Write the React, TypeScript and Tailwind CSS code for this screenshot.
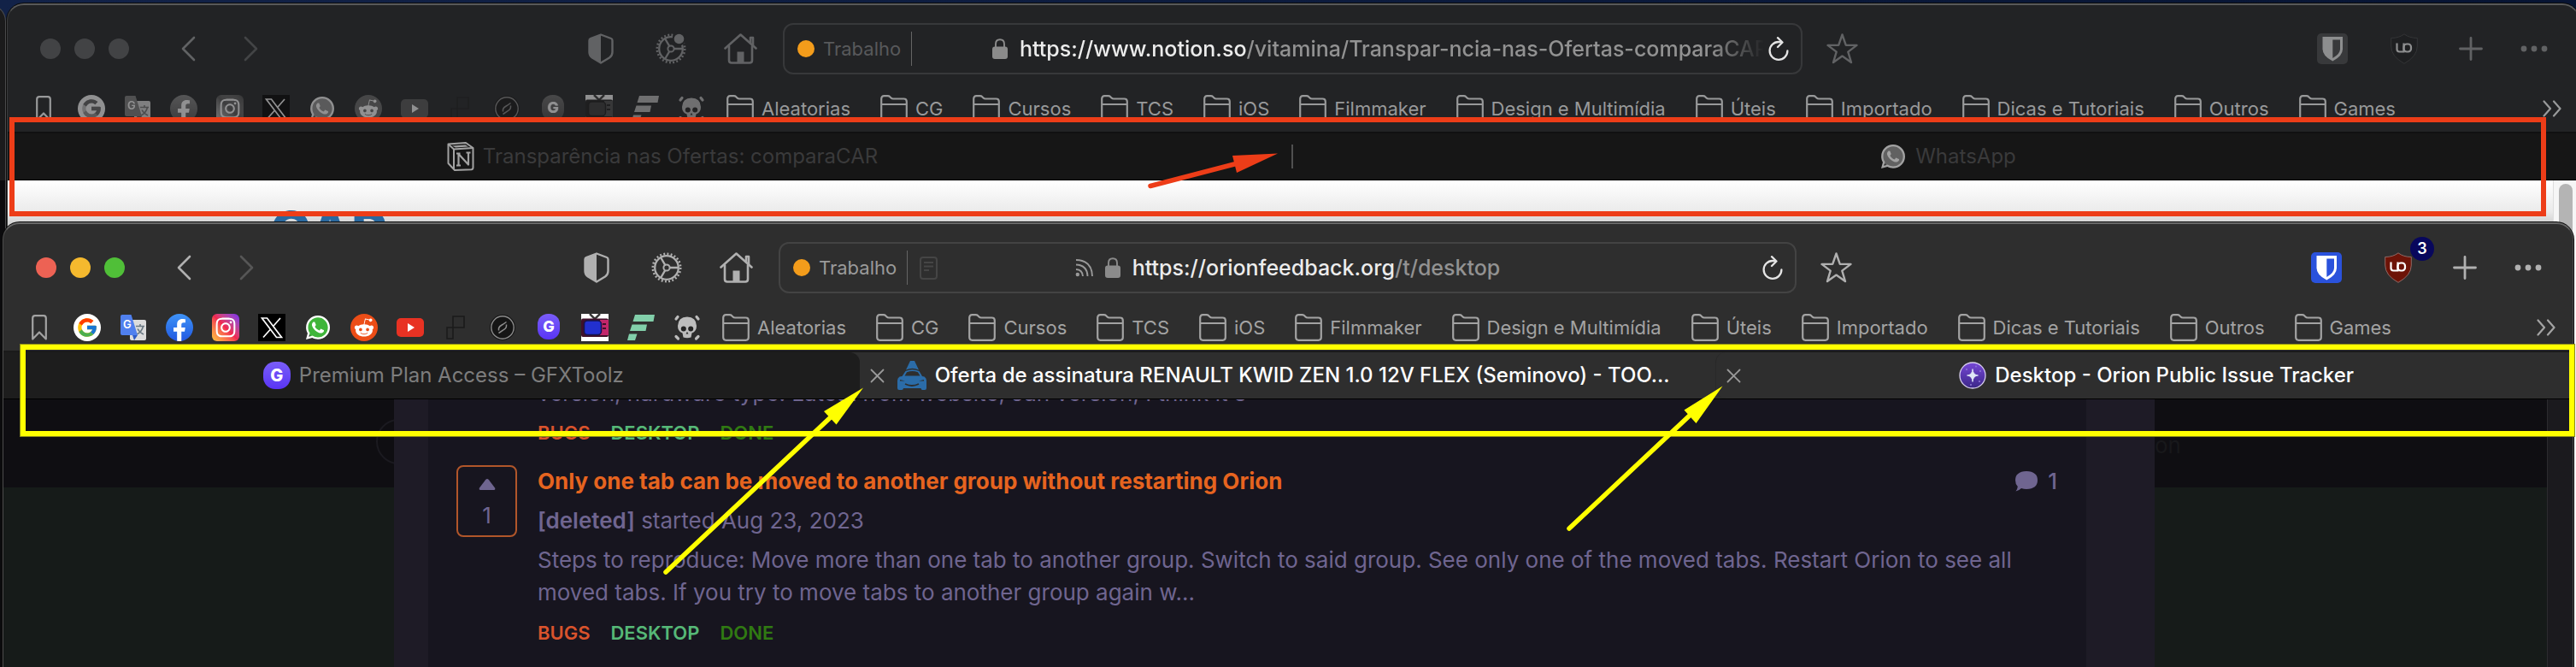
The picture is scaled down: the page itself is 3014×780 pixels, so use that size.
import type { ReactNode } from "react";
import { clsx } from "clsx";
import { FcGoogle } from "react-icons/fc";
import { FaFacebookF, FaInstagram, FaRedditAlien, FaWhatsapp } from "react-icons/fa";

interface Tab {
  title: string;
  icon: ReactNode;
  selected?: boolean;
  closable?: boolean;
  clipped?: boolean;
}

interface BrowserWindowProps {
  active?: boolean;
  host: string;
  path: string;
  tabs: Tab[];
  badge?: string;
  children: ReactNode;
}

const FOLDERS = [
  "Aleatorias",
  "CG",
  "Cursos",
  "TCS",
  "iOS",
  "Filmmaker",
  "Design e Multimídia",
  "Úteis",
  "Importado",
  "Dicas e Tutoriais",
  "Outros",
  "Games",
];

/* ---------- Toolbar icons ---------- */

function ChevronIcon({ flip }: { flip?: boolean }) {
  return (
    <svg width="17" height="30" viewBox="0 0 17 30" fill="none" stroke="currentColor" strokeWidth="2.6" strokeLinecap="round" strokeLinejoin="round">
      <path d={flip ? "M2 2L15 15L2 28" : "M15 2L2 15L15 28"} />
    </svg>
  );
}

function ShieldIcon() {
  return (
    <svg width="30" height="36" viewBox="0 0 30 36">
      <path d="M15 1.5L27 6Q28.5 6.6 28.5 8.5V22Q28.5 26 25 28.5L15 34.5L5 28.5Q1.5 26 1.5 22V8.5Q1.5 6.6 3 6Z" fill="none" stroke="currentColor" strokeWidth="2.4" strokeLinejoin="round" />
      <path d="M15 1.5V34.5L5 28.5Q1.5 26 1.5 22V8.5Q1.5 6.6 3 6Z" fill="currentColor" />
    </svg>
  );
}

function GearIcon({ dot }: { dot?: boolean }) {
  return (
    <svg width="36" height="36" viewBox="0 0 36 36" fill="none" stroke="currentColor">
      <circle cx="18" cy="18" r="16.2" strokeWidth="2.6" strokeDasharray="1.9 2.341" />
      <circle cx="18" cy="18" r="13.8" strokeWidth="2.3" />
      <circle cx="18" cy="18" r="3.6" strokeWidth="2" />
      <path d="M21.6 18H32M16.2 14.9L11 6M16.2 21.1L11 30" strokeWidth="2.3" />
      {dot && (
        <>
          <circle cx="27.5" cy="6.5" r="8" className="fill-[#222325]" stroke="none" />
          <circle cx="27.5" cy="6.5" r="5.8" fill="currentColor" stroke="none" />
        </>
      )}
    </svg>
  );
}

function HomeIcon() {
  return (
    <svg width="39" height="36" viewBox="0 0 39 36" fill="none" stroke="currentColor" strokeWidth="2.6" strokeLinejoin="round" strokeLinecap="round">
      <path d="M1.5 17.5L19.5 1.5L37.5 17.5" />
      <path d="M31 11V5H34V14" />
      <path d="M6 15V31.5Q6 34.5 9 34.5H30Q33 34.5 33 31.5V15" />
      <path d="M15.5 34V21.5H23.5V34Z" fill="currentColor" stroke="none" />
    </svg>
  );
}

function StarIcon() {
  return (
    <svg width="37" height="36" viewBox="0 0 37 36" fill="none" stroke="currentColor" strokeWidth="2.4" strokeLinejoin="round">
      <path d="M18.5 1.5L22.7 13.7L35.5 13.9L25.3 21.6L29 34L18.5 26.6L8 34L11.7 21.6L1.5 13.9L14.3 13.7Z" />
    </svg>
  );
}

function BitwardenIcon({ active }: { active?: boolean }) {
  return (
    <svg width="36" height="36" viewBox="0 0 36 36">
      <rect width="36" height="36" rx="5" fill={active ? "#2a52dc" : "#38393b"} />
      <path d="M6.5 4H30V18.5Q30 26.5 18.3 32.5Q6.5 26.5 6.5 18.5Z" fill={active ? "#ffffff" : "#8d8e8f"} />
      <path d="M18.3 7.5H27V18.5Q27 24 18.3 29Z" fill={active ? "#2a52dc" : "#38393b"} />
    </svg>
  );
}

function UblockIcon({ active }: { active?: boolean }) {
  return (
    <svg width="32" height="36" viewBox="0 0 32 36">
      <path d="M16 .8Q22 5.5 31.3 5.5V15Q31.3 27 16 35.3Q.7 27 .7 15V5.5Q10 5.5 16 .8Z" fill={active ? "#6d1307" : "#1e1f21"} stroke={active ? "#8f6a66" : "#343537"} />
      <g fill="none" stroke={active ? "#ffffff" : "#8d8e8f"} strokeWidth="2.2">
        <path d="M7.5 11.5V18.5Q7.5 21.5 10.5 21.5H15.500V11.500" />
        <rect x="15.5" y="12.5" width="8.5" height="9" rx="3.5" />
      </g>
    </svg>
  );
}

/* ---------- Bookmark icons ---------- */

function FolderIcon() {
  return (
    <svg className="shrink-0" width="32" height="32" viewBox="0 0 32 32" fill="none" stroke="currentColor" strokeWidth="2.2" strokeLinejoin="round">
      <path d="M1.2 27.5V4.5Q1.2 1.2 4.5 1.2H8.5Q10.3 1.2 11.3 2.3L12.5 3.5Q13.5 4.5 15 4.5H27.5Q30.8 4.5 30.8 7.8V27.5Q30.8 30.8 27.5 30.8H4.5Q1.2 30.8 1.2 27.5Z" />
      <path d="M1.2 11H30.8" />
    </svg>
  );
}

function GfxIcon({ small }: { small?: boolean }) {
  return (
    <span className={clsx("flex items-center justify-center bg-linear-to-b from-[#7a5cf8] to-[#5a33f5] font-extrabold leading-none text-white", small ? "mx-[3px] h-[30px] w-[26px] rounded-xl text-[18px]" : "size-8 rounded-[14px] text-xl")}>
      G
    </span>
  );
}

function WhatsappIcon() {
  return (
    <span className="relative flex size-8 items-center justify-center">
      <span className="absolute size-[26px] rounded-full bg-[#3fb53a]" />
      <FaWhatsapp className="relative size-8 text-white" />
    </span>
  );
}

function NotionIcon() {
  return (
    <svg width="32" height="34" viewBox="0 0 32 34" fill="none" stroke="#ffffff" strokeLinejoin="round">
      <path d="M1.500 2.500L22 1L30.500 7V30Q30.500 32 28.500 32.200L9 33L1.500 25Z" strokeWidth="2" />
      <path d="M1.500 2.500L8 8.500L30.500 7M8 8.500V32" strokeWidth="2" />
      <path d="M6 4.500L21.500 3.500L25 5.500L10 6.500Z" fill="#ffffff" stroke="none" />
      <path d="M13.500 27V14L25 26.500V13M11 13.500H15.500M22.500 12.500H27.500M11 27.500H16" strokeWidth="2.200" />
    </svg>
  );
}

function OrionIcon() {
  return (
    <svg width="32" height="32" viewBox="0 0 32 32">
      <defs>
        <linearGradient id="orion" x1="0" y1="0" x2="0" y2="1">
          <stop offset="0" stopColor="#7747d6" />
          <stop offset="1" stopColor="#3b2788" />
        </linearGradient>
      </defs>
      <circle cx="16" cy="16" r="15" fill="url(#orion)" stroke="#d9cff0" strokeWidth="1.3" />
      <path d="M16 8.5Q16.5 15.500 22.500 16Q16.500 16.500 16 23.500Q15.500 16.500 9.500 16Q15.500 15.500 16 8.500Z" fill="#dfe7f6" stroke="#dfe7f6" strokeWidth=".8" />
      <g fill="#8f79d8">
        <circle cx="9" cy="9" r="1" />
        <circle cx="20" cy="5.5" r=".9" />
        <circle cx="25" cy="11" r="1" />
        <circle cx="14" cy="27" r="1" />
        <circle cx="24" cy="23" r="1" />
      </g>
    </svg>
  );
}

function CarIcon() {
  return (
    <svg width="34" height="34" viewBox="0 0 34 34" fill="#2b6ca8">
      <path d="M15 0H20L25 10.500Q17.500 7 10 10.500Z" />
      <path d="M9.500 12Q17.500 8.500 25.500 12L29 18L31.500 18.500Q34 20 34 23V32Q34 34 32 34H29.500Q27.500 34 27.500 32H7Q7 34 5 34H2Q0 34 0 32V23Q0 20 2.500 18.500L5.500 18Z" />
      <path d="M11 13.300Q17.500 10.800 24 13.300L26.500 17.500H8.500Z" fill="#2e2e2e" />
      <path d="M3 22L9 23.500H3ZM31 22L25 23.500H31Z" fill="#2e2e2e" />
      <path d="M9 27Q17 31 25 27" fill="none" stroke="#2e2e2e" strokeWidth="1.8" />
    </svg>
  );
}

const SITES: { name: string; icon: ReactNode }[] = [
  {
    name: "Google",
    icon: (
      <span className="flex size-8 items-center justify-center rounded-full bg-white">
        <FcGoogle className="size-[26px]" />
      </span>
    ),
  },
  {
    name: "Google Translate",
    icon: (
      <svg width="32" height="32" viewBox="0 0 32 32">
        <rect x="12" y="7" width="19" height="24" rx="2" fill="#dcdcdc" />
        <path d="M19 14.5H29M24 12V14.5M27.5 14.5Q26 21 20 24M21 17.5Q23 21.5 28 24" fill="none" stroke="#6b7a84" strokeWidth="1.6" />
        <path d="M15 25H21L17 31Z" fill="#2f5bc4" />
        <path d="M3 1H13.5L21 25H3Q1 25 1 23V3Q1 1 3 1Z" fill="#5080ee" />
        <text x="4" y="17" fontSize="13" fontWeight="600" fill="#ffffff">G</text>
      </svg>
    ),
  },
  {
    name: "Facebook",
    icon: (
      <span className="flex size-8 items-end justify-center overflow-hidden rounded-full bg-linear-to-b from-[#3f93f7] to-[#2457e0]">
        <FaFacebookF className="size-[26px] text-white" />
      </span>
    ),
  },
  {
    name: "Instagram",
    icon: (
      <span className="flex size-8 items-center justify-center rounded-md bg-linear-to-tr from-[#fdc53a] via-[#f0274f] to-[#7a1df5]">
        <FaInstagram className="size-[26px] text-white" />
      </span>
    ),
  },
  {
    name: "X",
    icon: (
      <svg width="32" height="32" viewBox="0 0 32 32">
        <rect width="32" height="32" fill="#000000" />
        <path d="M4.5 5H10.5L27.5 27.5H21.5ZM26 5L17.5 14.7M14.3 18.2L6 27.5" fill="none" stroke="#ffffff" strokeWidth="1.7" />
      </svg>
    ),
  },
  { name: "WhatsApp", icon: <WhatsappIcon /> },
  {
    name: "Reddit",
    icon: (
      <span className="flex size-8 items-center justify-center rounded-full bg-[#ec4d17]">
        <FaRedditAlien className="size-6 text-white" />
      </span>
    ),
  },
  {
    name: "YouTube",
    icon: (
      <svg width="32" height="32" viewBox="0 0 32 32">
        <rect x="0" y="5" width="32" height="22" rx="5" fill="#e83223" />
        <path d="M13 11L21 16L13 21Z" fill="#ffffff" />
      </svg>
    ),
  },
  {
    name: "Blocks",
    icon: (
      <svg width="32" height="32" viewBox="0 0 32 32" fill="none" stroke="#1b1b1b" strokeWidth="1.6">
        <path d="M12 3H25V16H12ZM5 16H12V29H5Z" />
      </svg>
    ),
  },
  {
    name: "Feather",
    icon: (
      <svg width="32" height="32" viewBox="0 0 32 32">
        <circle cx="16" cy="16" r="15" fill="#151515" />
        <circle cx="16" cy="16" r="13.2" fill="none" stroke="#8b8b8b" strokeWidth="1.4" />
        <path d="M11.5 19.5V17Q12 14.5 16 12.5L20.5 9.5M11.5 22.5L16.5 19.2Q20.5 17 20.5 14V12.5" fill="none" stroke="#8b8b8b" strokeWidth="1.5" />
      </svg>
    ),
  },
  { name: "GFXToolz", icon: <GfxIcon small /> },
  {
    name: "TV",
    icon: (
      <svg width="32" height="32" viewBox="0 0 32 32">
        <rect width="32" height="32" fill="#ffffff" />
        <path d="M10 0L16 6L22 0" fill="none" stroke="#3a3a3a" strokeWidth="2.5" />
        <rect x="0" y="5.5" width="32" height="21.5" rx="2" fill="#40102a" />
        <rect x="22" y="7" width="10" height="18" fill="#c2266b" />
        <path d="M25 12H29M25 17H29" stroke="#40102a" strokeWidth="2" />
        <rect x="3.5" y="8" width="20" height="16.5" rx="4" fill="#2230cf" stroke="#15154f" strokeWidth="1.5" />
      </svg>
    ),
  },
  {
    name: "Freepik",
    icon: (
      <svg width="32" height="32" viewBox="0 0 32 32" fill="#82cfaa">
        <path d="M9 1H32L30.5 9H6.5ZM5.5 12.5H23L21.5 20H3ZM2 23.5H11.5L9 31H0Z" />
      </svg>
    ),
  },
  {
    name: "Skull",
    icon: (
      <svg width="32" height="32" viewBox="0 0 32 32" fill="#bdbdbd">
        <path d="M16 3.5Q26.5 3.5 27 14Q27.2 20.5 21.5 22.5L20.5 27.5Q16 29 11.5 27.5L10.5 22.5Q4.8 20.5 5 14Q5.5 3.5 16 3.5Z" />
        <circle cx="11.8" cy="17.5" r="3" fill="#232323" />
        <circle cx="20.2" cy="17.5" r="3" fill="#232323" />
        <path d="M16 21L17.5 23.5H14.5Z" fill="#232323" />
        <g stroke="#bdbdbd" strokeWidth="3.2" strokeLinecap="round">
          <path d="M3 6L5 3.5M29 6L27 3.5M3 26.5L5.500 29M29 26.5L26.500 29" />
        </g>
      </svg>
    ),
  },
];

/* ---------- Browser window ---------- */

function AddressBar({ active, host, path }: { active?: boolean; host: string; path: string }) {
  return (
    <div className={clsx("grid h-[60px] flex-1 grid-cols-[minmax(243px,1fr)_minmax(0,auto)_minmax(43px,1fr)] items-center rounded-xl border-2", active ? "border-[#434343]" : "border-[#37383a]")}>
      <div className="flex items-center pl-[15px]">
        <button className={clsx("flex items-center gap-[10px] text-[22px] leading-7", active ? "text-[#9a9a9a]" : "text-[#58595b]")}>
          <span className="size-5 rounded-full bg-[#f39c1b]" />
          Trabalho
        </button>
        <span className="ml-3 h-10 w-px bg-[#656565]" />
        {active && (
          <svg className="ml-[14px]" width="21" height="27" viewBox="0 0 21 27" fill="none" stroke="#454545" strokeWidth="2">
            <rect x="1" y="1" width="19" height="25" rx="3" />
            <path d="M5 7H16M5 11.5H16M5 16H11" />
          </svg>
        )}
      </div>
      <a href="#" className={clsx("flex items-center gap-[14px] overflow-hidden whitespace-nowrap text-[25px] font-medium leading-8", !active && "[mask-image:linear-gradient(to_right,black_93%,transparent)]")}>
        {active && (
          <svg className="shrink-0" width="21" height="21" viewBox="0 0 21 21" fill="none" stroke="#9a9a9a" strokeWidth="1.9">
            <path d="M1 1Q19.5 1.5 20 20M1 6.5Q14 7 14.5 20M1 12Q8.5 12.5 9 20" />
            <circle cx="2.8" cy="18" r="2.2" fill="#9a9a9a" stroke="none" />
          </svg>
        )}
        <svg className="shrink-0" width="18" height="24" viewBox="0 0 18 24">
          <rect x="0" y="9.5" width="18" height="14.5" rx="3" fill="#8b8b8b" />
          <path d="M4 11V6.5Q4 1.2 9 1.2Q14 1.2 14 6.5V11" fill="none" stroke="#8b8b8b" strokeWidth="1.9" />
        </svg>
        <span className="text-[#929292]">
          <span className="text-[#ececec]">{host}</span>
          {path}
        </span>
      </a>
      <div className="flex justify-end pr-[14px] text-[#e4e4e4]">
        <button aria-label="Reload">
          <svg width="24" height="28" viewBox="0 0 24 28" fill="none" stroke="currentColor" strokeWidth="2.3" strokeLinecap="round" strokeLinejoin="round">
            <path d="M15 6.5Q13.5 6 12 6A10.4 10.4 0 1 0 22.4 16.5" />
            <path d="M11 1.2L16.5 6.5L11 12" />
          </svg>
        </button>
      </div>
    </div>
  );
}

function BrowserWindow({ active, host, path, tabs, badge, children }: BrowserWindowProps) {
  return (
    <section
      className={clsx(
        "flex h-full flex-col overflow-hidden rounded-t-[20px] border border-b-0 border-t-2 shadow-[0_0_0_1px_#0c0c0c]",
        active ? "border-x-[#4c4c4c] border-t-[#696969] bg-[#2e2e2e]" : "border-x-[#3b3c3d] border-t-[#58595a] bg-[#222325]"
      )}
    >
      <div className={clsx("flex h-[102px] shrink-0 items-center pl-[38px] pr-9", active ? "text-[#b0b0b0]" : "text-[#616264]")}>
        <div className="flex gap-4">
          <button aria-label="Close window" className={clsx("size-6 rounded-full", active ? "bg-[#ed6254]" : "bg-[#424345]")} />
          <button aria-label="Minimize window" className={clsx("size-6 rounded-full", active ? "bg-[#f5b92e]" : "bg-[#424345]")} />
          <button aria-label="Zoom window" className={clsx("size-6 rounded-full", active ? "bg-[#50bf38]" : "bg-[#424345]")} />
        </div>
        <button aria-label="Back" className="ml-[61px]">
          <ChevronIcon />
        </button>
        <button aria-label="Forward" className={clsx("ml-14", active ? "text-[#565656]" : "text-[#434446]")}>
          <ChevronIcon flip />
        </button>
        <span className="w-[386px] shrink" />
        <button aria-label="Privacy report"><ShieldIcon /></button>
        <button aria-label="Website settings" className="ml-[49px]"><GearIcon dot={!active} /></button>
        <button aria-label="Home" className="ml-11 mr-[30px]"><HomeIcon /></button>
        <AddressBar active={active} host={host} path={path} />
        <button aria-label="Add bookmark" className="ml-7"><StarIcon /></button>
        <span className="w-[537px] shrink" />
        <button aria-label="Bitwarden"><BitwardenIcon active={active} /></button>
        <button aria-label="uBlock Origin" className="relative ml-[50px]">
          <UblockIcon active={active} />
          {badge && (
            <span className="absolute -top-[18px] left-[30px] flex size-7 items-center justify-center rounded-full bg-[#08075c] text-lg font-semibold text-white">
              {badge}
            </span>
          )}
        </button>
        <button aria-label="New tab" className="ml-12">
          <svg width="28" height="28" viewBox="0 0 28 28" fill="none" stroke="currentColor" strokeWidth="2.8" strokeLinecap="round">
            <path d="M14 1.5V26.5M1.5 14H26.5" />
          </svg>
        </button>
        <button aria-label="More" className="ml-11">
          <svg width="32" height="8" viewBox="0 0 32 8" fill="currentColor">
            <circle cx="4" cy="4" r="3.4" />
            <circle cx="16" cy="4" r="3.4" />
            <circle cx="28" cy="4" r="3.4" />
          </svg>
        </button>
      </div>

      <nav className={clsx("flex h-[46px] shrink-0 items-center pb-2 pl-[33px] pr-[20px] text-[22px] leading-8", active ? "text-[#a3a3a3]" : "text-[#98999a]")}>
        <svg className="mr-[31px] shrink-0" width="18" height="30" viewBox="0 0 18 30" fill="none" stroke="currentColor" strokeWidth="2.2" strokeLinejoin="round">
          <path d="M1.2 28.5V4Q1.2 1.2 4 1.2H14Q16.8 1.2 16.8 4V28.5L9 20.5Z" />
        </svg>
        <div className={clsx("flex gap-[22px]", !active && "opacity-50 grayscale")}>
          {SITES.map((site) => (
            <a key={site.name} href="#" aria-label={site.name} className="shrink-0">
              {site.icon}
            </a>
          ))}
        </div>
        <div className="ml-[25px] flex gap-[35px]">
          {FOLDERS.map((name) => (
            <button key={name} className="flex items-center gap-[9px] whitespace-nowrap">
              <FolderIcon />
              {name}
            </button>
          ))}
        </div>
        <button aria-label="More bookmarks" className="ml-auto">
          <svg width="22" height="20" viewBox="0 0 22 20" fill="none" stroke="currentColor" strokeWidth="2.2" strokeLinecap="round" strokeLinejoin="round">
            <path d="M1.5 1.5L9 10L1.5 18.5M13 1.5L20.5 10L13 18.5" />
          </svg>
        </button>
      </nav>

      <div
        role="tablist"
        className={clsx(
          "flex h-[57px] shrink-0 border-b border-t-2 border-b-black text-2xl",
          active ? "border-t-[#1a1a1a] bg-[#2e2e2e]" : "border-t-[#101011] bg-[#161616]"
        )}
      >
        {tabs.map((tab, i) => (
          <div
            key={tab.title}
            role="tab"
            aria-selected={!!tab.selected}
            className={clsx(
              "relative flex min-w-0 flex-1 items-center pl-11 pr-4",
              active && !tab.selected && "rounded-tr-xl bg-[#1d1d1d] text-[#7d7d7d]",
              active && tab.selected && "font-medium text-white",
              active && tab.selected && i > 1 && "rounded-l-xl border-l border-[#282828]",
              !active && "text-[#3a3a3b]",
              !tab.clipped && "justify-center"
            )}
          >
            {tab.closable && (
              <button aria-label="Close tab" className="absolute left-3 text-[#999999]">
                <svg width="17" height="17" viewBox="0 0 17 17" fill="none" stroke="currentColor" strokeWidth="1.8" strokeLinecap="round">
                  <path d="M1.5 1.5L15.5 15.5M15.5 1.5L1.5 15.5" />
                </svg>
              </button>
            )}
            <span className={clsx("mr-[10px] shrink-0", !active && "opacity-60 grayscale")}>{tab.icon}</span>
            <span className="truncate">{tab.title}</span>
            {!active && i === 0 && <span className="absolute right-0 h-7 w-[2px] bg-[#505050]" />}
          </div>
        ))}
      </div>

      <div className="flex min-h-0 flex-1">{children}</div>
    </section>
  );
}

/* ---------- Page shown in the front window ---------- */

function Tags() {
  return (
    <div className="flex gap-6 text-[22px] font-semibold leading-[38px]">
      <a href="#" className="text-[#d9532c]">BUGS</a>
      <a href="#" className="text-[#56b877]">DESKTOP</a>
      <a href="#" className="text-[#307a12]">DONE</a>
    </div>
  );
}

function IssueTracker() {
  return (
    <>
      <div className="flex w-[457px] shrink-0 flex-col bg-[#161b19]">
        <div className="flex h-[103px] justify-end overflow-hidden bg-[#0f0e12] pt-[23px]">
          <span className="-mr-8 size-[53px] rounded-full border-2 border-[#1b1a20]" />
        </div>
      </div>
      <main className="flex min-w-0 flex-1 bg-[#1e1b26] pl-10 pr-20">
        <div className="w-full overflow-hidden bg-[#17151f] pl-[33px] pr-[34px] text-[26px] leading-[38px] text-[#6f6590]">
          <div className="-mt-[26px] pl-[95px]">
            <p className="whitespace-nowrap">version, hardware type: Latest from website, Jan version, I think it's</p>
            <div className="mt-2">
              <Tags />
            </div>
          </div>
          <article className="mt-[19px] flex items-start">
            <button aria-label="Upvote" className="flex h-[84px] w-[71px] shrink-0 flex-col items-center rounded-lg border-2 border-[#b1562a] pt-[14px]">
              <svg width="20" height="13" viewBox="0 0 20 13" fill="currentColor">
                <path d="M10 0Q11 0 12 1.2L19 10.5Q20 12.7 18 13H2Q0 12.7 1 10.5L8 1.2Q9 0 10 0Z" />
              </svg>
              <span className="mt-[11px] leading-[38px]">1</span>
            </button>
            <div className="ml-6 min-w-0 flex-1">
              <div className="flex justify-between">
                <h2 className="font-bold">
                  <a href="#" className="text-[#e6641f]">Only one tab can be moved to another group without restarting Orion</a>
                </h2>
                <span className="flex items-center gap-3 font-medium">
                  <svg width="26" height="24" viewBox="0 0 26 24" fill="currentColor">
                    <path d="M13 0Q26 .5 26 10.5Q26 20.5 13 21Q10 21 7 20Q4.5 22.5 .5 23.5Q2.5 21 2.8 18Q0 15 0 10.5Q0 .5 13 0Z" />
                  </svg>
                  1
                </span>
              </div>
              <p className="mt-2">
                <b className="font-semibold">[deleted]</b> started Aug 23, 2023
              </p>
              <p className="mt-2 whitespace-nowrap">
                Steps to reproduce: Move more than one tab to another group. Switch to said group. See only one of the moved tabs. Restart Orion to see all
                <br />
                moved tabs. If you try to move tabs to another group again w...
              </p>
              <div className="mt-[9px]">
                <Tags />
              </div>
            </div>
          </article>
        </div>
      </main>
      <div className="flex w-[459px] shrink-0 flex-col bg-[#161b19]">
        <div className="h-[103px] overflow-hidden bg-[#0f0e12] pt-[38px] text-[26px] leading-8 text-[#18181b]">on</div>
      </div>
      <div className="w-[30px] shrink-0 border-l border-[#2c2b2f] bg-[#1b1a1e]" />
    </>
  );
}

function NotionPage() {
  return (
    <>
      <div className="flex-1 overflow-hidden bg-linear-to-b from-white via-[#ebebeb] via-[36px] to-[#d6d6d6] to-[48px]">
        <p className="pl-[307px] pt-[27px] text-[64px] font-extrabold leading-[66px] text-[#2a699f]">CAR</p>
      </div>
      <div className="w-[30px] shrink-0 border-l border-[#dedede] bg-[#f6f6f6] pl-[6px] pt-1">
        <div className="h-full w-4 rounded-t-full bg-[#b4b4b4]" />
      </div>
    </>
  );
}

export default function App() {
  return (
    <div className="relative min-h-screen overflow-hidden bg-linear-to-r from-[#122248] to-[#071433] [font-family:Inter,'Liberation_Sans',sans-serif]">
      {/* sliver of the window furthest back */}
      <div className="absolute bottom-0 -left-10 top-[5px] w-[47px] rounded-tr-[20px] border-r border-t border-[#4a4a4b] bg-linear-to-b from-[#1b1b1c] from-[205px] to-[#0b0b0d] to-[205px]" />

      <div className="absolute -right-1 bottom-0 left-2 top-1">
        <BrowserWindow
          host="https://www.notion.so"
          path="/vitamina/Transpar-ncia-nas-Ofertas-comparaCAR-"
          tabs={[
            { title: "Transparência nas Ofertas: comparaCAR", icon: <NotionIcon /> },
            { title: "WhatsApp", icon: <WhatsappIcon /> },
          ]}
        >
          <NotionPage />
        </BrowserWindow>
      </div>

      <div className="absolute inset-x-[3px] bottom-0 top-[260px]">
        <BrowserWindow
          active
          host="https://orionfeedback.org"
          path="/t/desktop"
          badge="3"
          tabs={[
            { title: "Premium Plan Access – GFXToolz", icon: <GfxIcon /> },
            { title: "Oferta de assinatura RENAULT KWID ZEN 1.0 12V FLEX (Seminovo) - TOO...", icon: <CarIcon />, selected: true, closable: true, clipped: true },
            { title: "Desktop - Orion Public Issue Tracker", icon: <OrionIcon />, selected: true, closable: true },
          ]}
        >
          <IssueTracker />
        </BrowserWindow>
      </div>

      {/* annotations */}
      <div className="pointer-events-none absolute left-[11px] right-[35px] top-[137px] h-[116px] border-[6px] border-[#ed3d18]" />
      <div className="pointer-events-none absolute left-6 right-[2px] top-[403px] h-[107px] border-[6px] border-[#ffff00] shadow-[0_0_0_1px_#8a8a1a]" />
      <svg className="pointer-events-none absolute left-0 top-0" width="3014" height="780" viewBox="0 0 3014 780">
        <g fill="#ed3d18" stroke="#ed3d18">
          <path d="M1346 217.5L1448 191" strokeWidth="5.5" strokeLinecap="round" />
          <path d="M1495 179.5L1442 182L1447 202Z" stroke="none" />
        </g>
        <g fill="#ffff00" stroke="#ffff00" strokeLinecap="round">
          <path d="M779 669L975 485M1836 618L1980 483" strokeWidth="5.5" />
          <path d="M1010 453.5L964 481L978.5 496.5ZM2015.5 451.5L1970.5 479.5L1984.5 495Z" stroke="none" />
        </g>
      </svg>
    </div>
  );
}
